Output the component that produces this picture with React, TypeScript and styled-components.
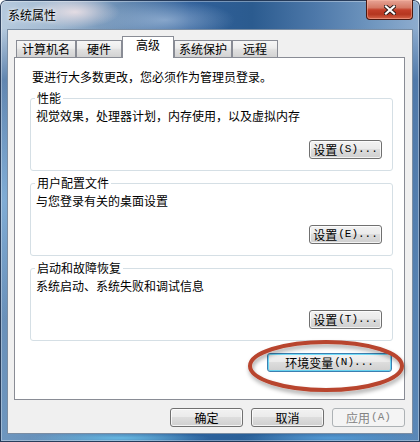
import React from "react";
import styled, { createGlobalStyle } from "styled-components";

const Global = createGlobalStyle`
  html, body { margin: 0; padding: 0; }
  body {
    font-family: "Noto Sans CJK SC", "Noto Sans", sans-serif;
    font-size: 12px;
    color: #000;
  }
`;

const Window = styled.div`
  position: relative;
  width: 420px;
  height: 442px;
  box-sizing: border-box;
  padding: 0 7px 8px 7px;
  display: flex;
  flex-direction: column;
  overflow: hidden;
  border-radius: 6px 6px 0 0;
  background:
    radial-gradient(ellipse 45px 16px at 75px 12px, rgba(255, 236, 236, 0.75), transparent),
    radial-gradient(ellipse 70px 20px at 165px 20px, rgba(190, 210, 235, 0.55), transparent),
    radial-gradient(ellipse 30px 120px at 4px 200px, rgba(150, 200, 240, 0.55), transparent),
    radial-gradient(ellipse 90px 6px at 120px 438px, rgba(110, 200, 240, 0.8), transparent),
    radial-gradient(ellipse 90px 6px at 330px 438px, rgba(90, 170, 230, 0.7), transparent),
    linear-gradient(180deg, rgba(0, 0, 0, 0) 0px, rgba(0, 0, 0, 0) 28px, rgba(30, 80, 140, 0.55) 80px, rgba(40, 100, 160, 0.5) 442px),
    linear-gradient(90deg, #b6cade 0%, #a0b8d0 14%, #6489b1 30%, #30609a 45%, #2b5b8f 60%, #4d78a9 75%, #7399c1 90%, #8fadcf 100%);
  box-shadow: inset 0 0 0 1px rgba(20, 40, 70, 0.85), inset 0 0 0 2px rgba(255, 255, 255, 0.35);
`;

const TitleBar = styled.div`
  height: 29px;
  display: flex;
  align-items: center;
  justify-content: space-between;
  padding-left: 1px;
`;

const Title = styled.span`
  font-size: 12px;
  line-height: 14px;
  margin-top: 1px;
  color: #000;
  text-shadow: 0 0 6px rgba(255, 255, 255, 0.95), 0 0 3px rgba(255, 255, 255, 0.9);
`;

const CloseButton = styled.div`
  align-self: flex-start;
  width: 47px;
  height: 20px;
  box-sizing: border-box;
  display: flex;
  align-items: center;
  justify-content: center;
  border: 1px solid #4a1810;
  border-top: none;
  border-radius: 0 0 4px 4px;
  background: linear-gradient(180deg, #e7a496 0%, #d57a66 40%, #c3402a 52%, #b5361f 75%, #d5654a 100%);
  box-shadow: inset 0 0 0 1px rgba(255, 190, 170, 0.45);
`;

const Client = styled.div`
  flex: 1;
  display: flex;
  flex-direction: column;
  border: 1px solid #7a8da3;
  background: #f0f0f0;
  padding: 6px 7px 6px 6px;
`;

const TabStrip = styled.div`
  display: flex;
  align-items: flex-end;
  height: 21px;
  padding-left: 2px;
  position: relative;
  z-index: 1;
`;

const Tab = styled.div<{ $w: number; $active?: boolean }>`
  width: ${(p) => p.$w}px;
  box-sizing: border-box;
  height: ${(p) => (p.$active ? 22 : 17)}px;
  margin-bottom: ${(p) => (p.$active ? -1 : 0)}px;
  border: 1px solid #898c95;
  border-bottom: none;
  padding-top: 1px;
  line-height: 14px;
  text-align: center;
  white-space: nowrap;
  background: ${(p) =>
    p.$active
      ? "#ffffff"
      : "linear-gradient(180deg, #f6f6f6 0%, #ececec 45%, #e0e0e0 55%, #d2d2d2 100%)"};
`;

const Panel = styled.div`
  height: 343px;
  box-sizing: border-box;
  border: 1px solid #898c95;
  background: #ffffff;
  padding: 12px 11px 0 15px;
  display: flex;
  flex-direction: column;
`;

const Intro = styled.div`
  line-height: 14px;
  padding-left: 2px;
`;

const Group = styled.div<{ $mt: number }>`
  height: 73px;
  box-sizing: border-box;
  margin-top: ${(p) => p.$mt}px;
  border: 1px solid #d5dfe5;
  border-radius: 3px;
  padding: 0 10px 11px 5px;
  display: flex;
  flex-direction: column;
`;

const Legend = styled.div`
  align-self: flex-start;
  margin: -8px 0 0 -1px;
  padding: 0 2px;
  line-height: 14px;
  background: #ffffff;
`;

const GroupText = styled.div`
  margin-top: 4px;
  line-height: 14px;
`;

const ButtonRow = styled.div<{ $mt?: string; $pr?: number }>`
  margin-top: ${(p) => p.$mt ?? "auto"};
  padding-right: ${(p) => p.$pr ?? 0}px;
  display: flex;
  justify-content: flex-end;
  gap: 8px;
`;

const Button = styled.button<{ $w: number; $default?: boolean }>`
  width: ${(p) => p.$w}px;
  height: 19px;
  box-sizing: border-box;
  padding: 0;
  margin: 0;
  font-family: "Noto Sans CJK SC", "Noto Sans", sans-serif;
  font-size: 12px;
  line-height: 15px;
  color: #000;
  border: 1px solid ${(p) => (p.$default ? "#3c7fb1" : "#707070")};
  border-radius: 3px;
  background: linear-gradient(180deg, #f2f2f2 0%, #ebebeb 45%, #dddddd 50%, #cfcfcf 100%);
  box-shadow: inset 0 0 0 1px ${(p) => (p.$default ? "rgba(72, 214, 251, 0.75)" : "rgba(255, 255, 255, 0.75)")};
  display: flex;
  align-items: center;
  justify-content: center;
  white-space: nowrap;

  &:disabled {
    color: #838383;
    border-color: #adb2b5;
    background: #f4f4f4;
    box-shadow: none;
  }
`;

const Accel = styled.span`
  font-family: "Liberation Mono", monospace;
  font-size: 11px;
  margin-left: 1px;
`;

const Annotation = styled.svg`
  position: absolute;
  left: 242px;
  top: 334px;
  pointer-events: none;
`;

const CloseGlyph = () => (
  <svg width="12" height="10" viewBox="0 0 12 10">
    <path d="M2 1.5 L10 8.5 M10 1.5 L2 8.5" stroke="#2a1a18" strokeWidth="4" strokeLinecap="square" />
    <path d="M2 1.5 L10 8.5 M10 1.5 L2 8.5" stroke="#ffffff" strokeWidth="2.2" strokeLinecap="square" />
  </svg>
);

const Label = ({ text, accel }: { text: string; accel?: string }) => (
  <>
    {text}
    {accel && <Accel>{accel}</Accel>}
  </>
);

const groups = [
  { title: "性能", text: "视觉效果，处理器计划，内存使用，以及虚拟内存", key: "(S)...", mt: 14 },
  { title: "用户配置文件", text: "与您登录有关的桌面设置", key: "(E)...", mt: 12 },
  { title: "启动和故障恢复", text: "系统启动、系统失败和调试信息", key: "(T)...", mt: 12 },
];

const tabs = [
  { label: "计算机名", w: 60 },
  { label: "硬件", w: 46 },
  { label: "高级", w: 52, active: true },
  { label: "系统保护", w: 58 },
  { label: "远程", w: 46 },
];

export default function App() {
  return (
    <>
      <Global />
      <Window>
        <TitleBar>
          <Title>系统属性</Title>
          <CloseButton>
            <CloseGlyph />
          </CloseButton>
        </TitleBar>
        <Client>
          <TabStrip>
            {tabs.map((t) => (
              <Tab key={t.label} $w={t.w} $active={t.active}>
                {t.label}
              </Tab>
            ))}
          </TabStrip>
          <Panel>
            <Intro>要进行大多数更改，您必须作为管理员登录。</Intro>
            {groups.map((g) => (
              <Group key={g.title} $mt={g.mt}>
                <Legend>{g.title}</Legend>
                <GroupText>{g.text}</GroupText>
                <ButtonRow>
                  <Button $w={73}>
                    <Label text="设置" accel={g.key} />
                  </Button>
                </ButtonRow>
              </Group>
            ))}
            <ButtonRow $mt="12px" $pr={1}>
              <Button $w={125} $default>
                <Label text="环境变量" accel="(N)..." />
              </Button>
            </ButtonRow>
          </Panel>
          <ButtonRow $mt="8px">
            <Button $w={73}>确定</Button>
            <Button $w={73}>取消</Button>
            <Button $w={73} disabled>
              <Label text="应用" accel="(A)" />
            </Button>
          </ButtonRow>
        </Client>
        <Annotation width="172" height="68" viewBox="0 0 172 68">
          <defs>
            <filter id="shadow" x="-10%" y="-20%" width="120%" height="150%">
              <feDropShadow dx="1" dy="3" stdDeviation="2" floodColor="#000" floodOpacity="0.35" />
            </filter>
          </defs>
          <ellipse
            cx="84"
            cy="32"
            rx="76"
            ry="24"
            fill="none"
            stroke="#b8442e"
            strokeWidth="4"
            filter="url(#shadow)"
          />
        </Annotation>
      </Window>
    </>
  );
}
